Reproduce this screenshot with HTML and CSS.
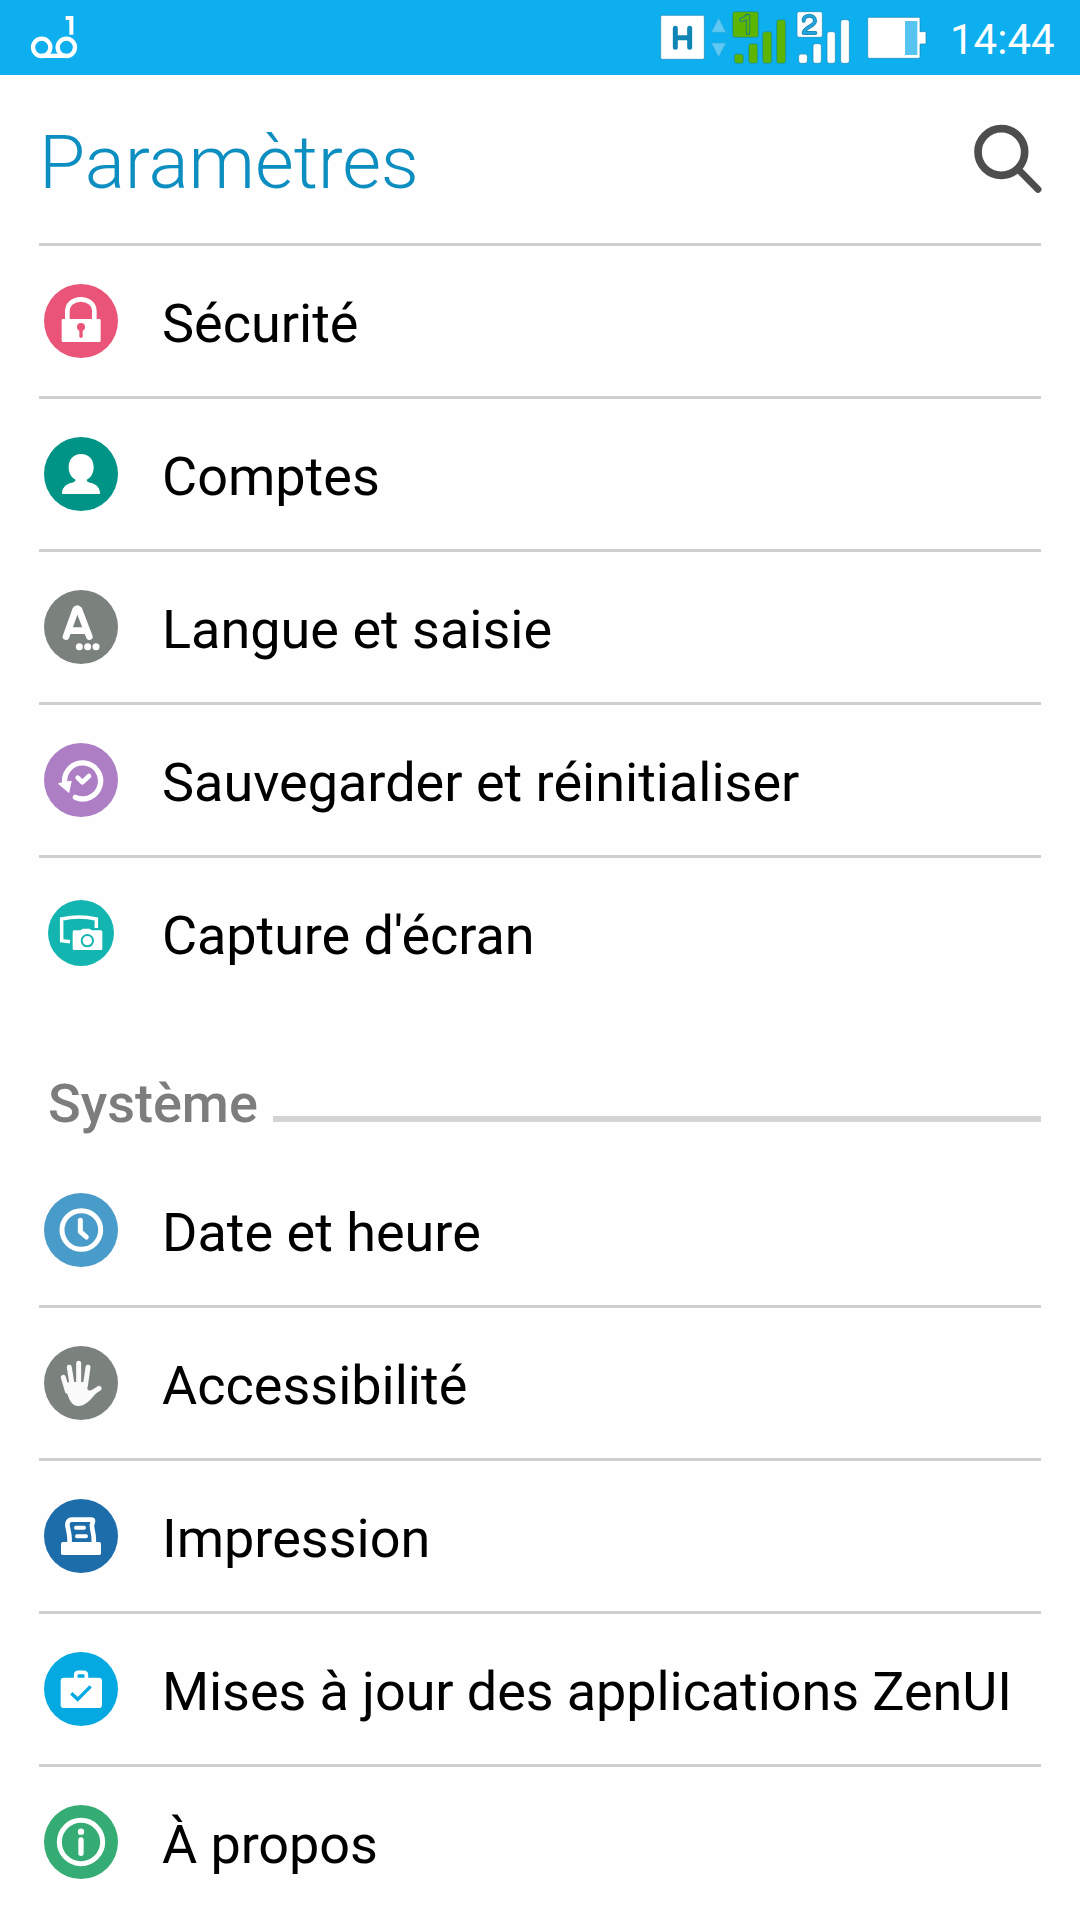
FILE: index.html
```html
<!DOCTYPE html>
<html lang="fr">
<head>
<meta charset="utf-8">
<title>Paramètres</title>
<link rel="stylesheet" href="styles.css">
</head>
<body>
<header class="status">
  <svg class="status-voicemail" viewBox="0 0 150 225" fill="none" stroke="#fff">
    <circle cx="35" cy="142" r="26" stroke-width="13"/>
    <circle cx="109" cy="142" r="26" stroke-width="13"/>
    <path d="M35 167.500H109" stroke-width="13"/>
    <path d="M107 54H124V104" stroke-width="12"/>
  </svg>
  <svg class="status-icons" viewBox="0 0 810 225">
    <g stroke="#1487b5" stroke-width="2">
      <rect x="2" y="46" width="131" height="132" rx="5" fill="#fff"/>
      <path d="M176 54L198 97H154ZM154 129H198L176 171Z" fill="#5fc9f3" stroke="#2ba9dc"/>
      <g fill="#5cb500">
        <rect x="218" y="35" width="77" height="77" rx="6"/>
        <rect x="223" y="162" width="27" height="28" rx="7"/>
        <rect x="266" y="131" width="27" height="59" rx="7"/>
        <rect x="308" y="95" width="27" height="95" rx="7"/>
        <rect x="350" y="59" width="27" height="131" rx="7"/>
      </g>
      <g fill="#fff">
        <rect x="411" y="35" width="76" height="77" rx="6"/>
        <rect x="416" y="162" width="26" height="28" rx="7"/>
        <rect x="459" y="131" width="25" height="59" rx="7"/>
        <rect x="501" y="95" width="25" height="95" rx="7"/>
        <rect x="542" y="59" width="26" height="131" rx="7"/>
        <path d="M628 52H776Q780 52 780 56V95H798V132H780V170Q780 175 776 175H628Q623 175 623 170V56Q623 52 628 52Z"/>
      </g>
    </g>
    <rect x="735" y="63" width="37" height="102" fill="#56c4f1"/>
    <path d="M46 85V142M89 85V142M46 113H89" fill="none" stroke="#1186b5" stroke-width="15" stroke-linecap="round"/>
    <path d="M244 59Q256 58 261 48H264V98" fill="none" stroke="#157e83" stroke-width="13" stroke-linecap="round" stroke-linejoin="round"/>
    <path d="M245 59Q256 58 261 49H264V97" fill="none" stroke="#5cb500" stroke-width="8" stroke-linecap="round" stroke-linejoin="round"/>
    <path d="M431 62C431 42 465 42 465 63C465 79 431 82 431 99H466" fill="none" stroke="#1487b5" stroke-width="12" stroke-linecap="round" stroke-linejoin="round"/>
    <path d="M431 62C431 42 465 42 465 63C465 79 431 82 431 99H466" fill="none" stroke="#25a5dc" stroke-width="7" stroke-linecap="round" stroke-linejoin="round"/>
  </svg>
  <time class="clock">14:44</time>
</header>

<div class="title-bar">
  <h1 class="title">Paramètres</h1>
  <svg class="search" viewBox="0 0 210 210" fill="none" stroke="#4d4d4d">
    <circle cx="82" cy="84" r="70" stroke-width="23"/>
    <path d="M133 136L192 196" stroke-width="21" stroke-linecap="round"/>
  </svg>
</div>

<main>
  <ul class="list">
    <li class="row">
      <svg class="icon" viewBox="0 0 222 222">
        <circle cx="111" cy="111" r="111" fill="#e95478"/>
        <path d="M70 110V82C70 34 151 34 151 82V110" fill="none" stroke="#fff" stroke-width="14"/>
        <rect x="53" y="105" width="117" height="69" rx="4" fill="#fff"/>
        <circle cx="111" cy="129" r="12" fill="#e95478"/>
        <path d="M111 132V157" stroke="#e95478" stroke-width="10" stroke-linecap="round"/>
      </svg>
      <span class="label">Sécurité</span>
    </li>
    <li class="row">
      <svg class="icon" viewBox="0 0 222 222">
        <circle cx="111" cy="111" r="111" fill="#009486"/>
        <path d="M111 51C135 51 149 68 149 90C149 108 141 122 130 127C126 131 129 135 138 137C158 141 169 153 168 171H54C53 153 65 141 84 137C94 135 96 131 93 127C82 122 74 108 74 90C74 68 88 51 111 51Z" fill="#fff"/>
      </svg>
      <span class="label">Comptes</span>
    </li>
    <li class="row">
      <svg class="icon" viewBox="0 0 222 222" fill="#fff">
        <circle cx="111" cy="111" r="111" fill="#7b827d"/>
        <path d="M66 140L95 59Q100 52 105 59L136 140M77 122H125" fill="none" stroke="#fff" stroke-width="20" stroke-linecap="round" stroke-linejoin="round"/>
        <circle cx="106" cy="170" r="10.500"/><circle cx="131" cy="170" r="10.500"/><circle cx="156" cy="170" r="10.500"/>
      </svg>
      <span class="label">Langue et saisie</span>
    </li>
    <li class="row">
      <svg class="icon" viewBox="0 0 222 222" fill="none" stroke="#fff" stroke-linecap="round" stroke-linejoin="round">
        <circle cx="111" cy="111" r="111" fill="#ad7ec3" stroke="none"/>
        <path d="M62 118A54 54 0 1 1 94 163" stroke-width="16"/>
        <path d="M45 122L81 115L74 147Z" fill="#fff" stroke-width="4"/>
        <path d="M101 104L115 118L135 99" stroke-width="14"/>
      </svg>
      <span class="label">Sauvegarder et réinitialiser</span>
    </li>
    <li class="row">
      <svg class="icon icon-small" viewBox="0 0 198 198">
        <circle cx="99" cy="99" r="99" fill="#13b5b1"/>
        <path d="M66 125L41 122V57Q94 45 145 57V84" fill="none" stroke="#fff" stroke-width="10.500"/>
        <path d="M78 91H98L104 86H125L131 91H158Q163 91 163 96V146Q163 150 159 150H79Q74 150 74 146V96Q74 91 78 91Z" fill="#fff"/>
        <circle cx="118" cy="122" r="17" fill="none" stroke="#13b5b1" stroke-width="6"/>
      </svg>
      <span class="label label-tight">Capture d'écran</span>
    </li>
  </ul>

  <div class="section">
    <h2 class="section-title">Système</h2>
    <div class="section-line"></div>
  </div>

  <ul class="list">
    <li class="row">
      <svg class="icon" viewBox="0 0 222 222" fill="none" stroke="#fff">
        <circle cx="111" cy="111" r="111" fill="#499bc9" stroke="none"/>
        <circle cx="112" cy="111" r="58" stroke-width="15"/>
        <path d="M109 82V116L127 132" stroke-width="15" stroke-linecap="round" stroke-linejoin="round"/>
      </svg>
      <span class="label">Date et heure</span>
    </li>
    <li class="row">
      <svg class="icon" viewBox="0 0 222 222">
        <circle cx="111" cy="111" r="111" fill="#7b827d"/>
        <path d="M58 94L70 135M76 64L84 115M104 52V115M132 64L124 120M165 127L133 148" fill="none" stroke="#fafafa" stroke-width="15" stroke-linecap="round"/>
        <path d="M62 111L78 108H131L130 129Q134 137 145 131L169 130Q158 139 149 150C137 165 121 181 101 180C82 179 71 158 62 111Z" fill="#fafafa"/>
      </svg>
      <span class="label">Accessibilité</span>
    </li>
    <li class="row">
      <svg class="icon" viewBox="0 0 222 222">
        <circle cx="111" cy="111" r="111" fill="#1d6dab"/>
        <g fill="none" stroke="#fff" stroke-linecap="round" stroke-linejoin="round">
          <path d="M76 132C79 114 75 102 71 84C68 70 74 62 84 62H143C150 63 146 70 144 77C142 92 152 103 149 132" stroke-width="14"/>
          <path d="M96 86H120M99 112H126" stroke-width="12"/>
        </g>
        <rect x="51" y="129" width="120" height="39" rx="5" fill="#fff"/>
      </svg>
      <span class="label">Impression</span>
    </li>
    <li class="row">
      <svg class="icon" viewBox="0 0 222 222">
        <circle cx="111" cy="111" r="111" fill="#04a9e1"/>
        <path d="M95 80V69Q95 61 103 61H119Q127 61 127 69V80" fill="none" stroke="#fff" stroke-width="11"/>
        <rect x="50" y="77" width="124" height="91" rx="10" fill="#fff"/>
        <path d="M82 124L101 142L140 103" fill="none" stroke="#04a9e1" stroke-width="10"/>
      </svg>
      <span class="label label-tight">Mises à jour des applications ZenUI</span>
    </li>
    <li class="row">
      <svg class="icon" viewBox="0 0 222 222">
        <circle cx="111" cy="111" r="111" fill="#34ac74"/>
        <circle cx="111" cy="111" r="65" fill="none" stroke="#fff" stroke-width="15"/>
        <circle cx="111" cy="80" r="9.500" fill="#fff"/>
        <path d="M111 105V145" stroke="#fff" stroke-width="16" stroke-linecap="round"/>
      </svg>
      <span class="label label-tight">À propos</span>
    </li>
  </ul>
</main>
</body>
</html>
```

FILE: styles.css
```css
* {
  box-sizing: border-box;
}

body {
  margin: 0;
  height: 1920px;
  overflow: hidden;
  background: #fefefe;
  color: #000;
  font-family: Roboto, "Noto Sans", sans-serif;
}

/* Status bar */
.status {
  display: flex;
  align-items: center;
  height: 75px;
  padding: 0 24px 0 30px;
  background: #0eafef;
}

.status-voicemail {
  width: 50px;
  height: 75px;
}

.status-icons {
  width: 270px;
  height: 75px;
  margin-left: auto;
}

.clock {
  width: 106px;
  margin-left: 20px;
  padding-top: 5px;
  color: #fff;
  font-size: 42px;
  line-height: 50px;
  white-space: nowrap;
}

/* Title */
.title-bar {
  display: flex;
  align-items: center;
  justify-content: space-between;
  height: 168px;
  padding: 0 36px 0 39px;
}

.title {
  margin: 0;
  padding-top: 5px;
  color: #0c8fc0;
  font-size: 75px;
  font-weight: 300;
  letter-spacing: -0.1px;
  line-height: 90px;
}

.search {
  width: 70px;
  height: 70px;
}

/* Settings rows */
.list {
  margin: 0 39px;
  padding: 0;
  list-style: none;
}

.row {
  display: flex;
  align-items: center;
  height: 153px;
  padding-left: 5px;
  border-top: 3px solid #cfcfcf;
}

.section + .list .row:first-child {
  height: 150px;
  border-top: 0;
}

.icon {
  flex: none;
  width: 74px;
  height: 74px;
}

.icon-small {
  width: 66px;
  height: 66px;
  margin: 0 4px;
}

.label {
  margin-left: 44px;
  padding-top: 5px;
  font-size: 54px;
  line-height: 64px;
  white-space: nowrap;
}

.label-tight {
  letter-spacing: -0.09px;
}

/* Section heading */
.section {
  display: flex;
  align-items: flex-end;
  gap: 15px;
  height: 147px;
  padding: 0 39px 19px 48px;
}

.section-title {
  margin: 0;
  color: #7d7d7d;
  font-size: 54px;
  font-weight: 500;
  line-height: 64px;
}

.section-line {
  flex: 1;
  height: 6px;
  margin-bottom: 14px;
  background: #d3d4d5;
}
```
